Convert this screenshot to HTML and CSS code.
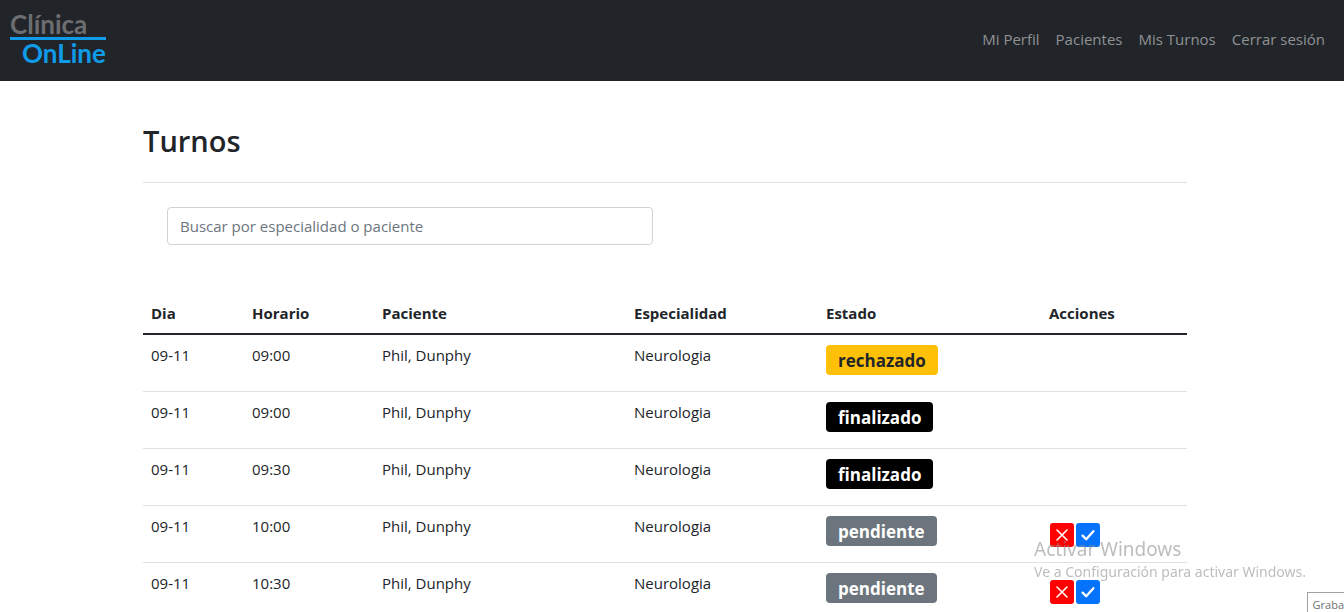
FILE: index.html
```html
<!DOCTYPE html>
<html lang="es">
<head>
<meta charset="utf-8">
<meta name="viewport" content="width=device-width, initial-scale=1">
<title>Clínica OnLine - Turnos</title>
<link rel="stylesheet" href="styles.css">
</head>
<body>
<svg class="sprite" aria-hidden="true">
  <symbol id="icon-x" viewBox="0 0 16 16"><path d="M3 3 13 13M13 3 3 13" fill="none" stroke="#fff" stroke-width="1.6" stroke-linecap="round"/></symbol>
  <symbol id="icon-check" viewBox="0 0 16 16"><path d="M2.6 8.6 6.2 12.2 13.4 4.2" fill="none" stroke="#fff" stroke-width="2.3" stroke-linecap="round" stroke-linejoin="round"/></symbol>
</svg>
<header class="navbar">
  <a class="brand" href="#">
    <span class="brand-top">Clínica</span>
    <span class="brand-bottom">OnLine</span>
  </a>
  <nav class="nav-links">
    <a href="#">Mi Perfil</a>
    <a href="#">Pacientes</a>
    <a href="#">Mis Turnos</a>
    <a href="#">Cerrar sesión</a>
  </nav>
</header>
<main class="page">
  <h1 class="title">Turnos</h1>
  <div class="search">
    <input class="search-input" type="text" placeholder="Buscar por especialidad o paciente" aria-label="Buscar por especialidad o paciente">
  </div>
  <table class="turnos">
    <colgroup>
      <col class="col-dia"><col class="col-horario"><col class="col-paciente"><col class="col-especialidad"><col class="col-estado"><col class="col-acciones">
    </colgroup>
    <thead>
      <tr><th>Dia</th><th>Horario</th><th>Paciente</th><th>Especialidad</th><th>Estado</th><th>Acciones</th></tr>
    </thead>
    <tbody>
      <tr><td>09-11</td><td>09:00</td><td>Phil, Dunphy</td><td>Neurologia</td><td><span class="badge rechazado">rechazado</span></td><td></td></tr>
      <tr><td>09-11</td><td>09:00</td><td>Phil, Dunphy</td><td>Neurologia</td><td><span class="badge finalizado">finalizado</span></td><td></td></tr>
      <tr><td>09-11</td><td>09:30</td><td>Phil, Dunphy</td><td>Neurologia</td><td><span class="badge finalizado">finalizado</span></td><td></td></tr>
      <tr><td>09-11</td><td>10:00</td><td>Phil, Dunphy</td><td>Neurologia</td><td><span class="badge pendiente">pendiente</span></td><td><div class="actions"><button class="action reject" type="button" aria-label="Rechazar"><svg><use href="#icon-x"/></svg></button><button class="action accept" type="button" aria-label="Aceptar"><svg><use href="#icon-check"/></svg></button></div></td></tr>
      <tr><td>09-11</td><td>10:30</td><td>Phil, Dunphy</td><td>Neurologia</td><td><span class="badge pendiente">pendiente</span></td><td><div class="actions"><button class="action reject" type="button" aria-label="Rechazar"><svg><use href="#icon-x"/></svg></button><button class="action accept" type="button" aria-label="Aceptar"><svg><use href="#icon-check"/></svg></button></div></td></tr>
    </tbody>
  </table>
</main>
<aside class="watermark">
  <p class="watermark-title">Activar Windows</p>
  <p class="watermark-text">Ve a Configuración para activar Windows.</p>
</aside>
<div class="tooltip">Graba</div>
</body>
</html>
```
FILE: styles.css
```css
* {
  box-sizing: border-box;
}

body {
  margin: 0;
  height: 100vh;
  overflow: hidden auto;
  scrollbar-width: none;
  background: #fff;
  color: #212529;
  font-family: "Open Sans", "Noto Sans", sans-serif;
  font-size: 15px;
  line-height: 24px;
}

.sprite {
  position: absolute;
  width: 0;
  height: 0;
}

.navbar {
  display: flex;
  align-items: center;
  justify-content: space-between;
  height: 81px;
  padding: 0 19px 4px 10px;
  background: #212529;
}

.brand {
  display: flex;
  flex-direction: column;
  font-family: Lato, sans-serif;
  font-size: 26px;
  font-weight: 700;
  line-height: 26px;
  text-decoration: none;
}

.brand-top {
  color: #6c6d70;
  border-bottom: 3px solid #0f9be8;
}

.brand-bottom {
  padding-left: 12px;
  color: #0f9be8;
}

.nav-links {
  display: flex;
  gap: 16px;
}

.nav-links a {
  color: #909294;
  text-decoration: none;
}

.page {
  padding: 40px 157px 0 143px;
}

.title {
  margin: 0;
  padding-bottom: 21px;
  border-bottom: 1px solid #dee2e6;
  font-size: 29px;
  font-weight: 600;
  line-height: 40px;
}

.search {
  padding: 24px;
}

.search-input {
  display: block;
  width: 486px;
  max-width: 100%;
  height: 38px;
  padding: 6px 12px;
  border: 1px solid #ced4da;
  border-radius: 4px;
  font: inherit;
  color: inherit;
}

.search-input::placeholder {
  color: #6c757d;
  opacity: 1;
}

.turnos {
  width: 100%;
  margin-top: 24px;
  table-layout: fixed;
  border-collapse: separate;
  border-spacing: 0;
}

.col-dia { width: 101px; }
.col-horario { width: 130px; }
.col-paciente { width: 252px; }
.col-especialidad { width: 192px; }
.col-estado { width: 223px; }
.col-acciones { width: 146px; }

.turnos th {
  padding: 8px;
  border-bottom: 2px solid #212529;
  text-align: left;
  font-weight: 700;
}

.turnos td {
  height: 57px;
  padding: 8px;
  border-bottom: 1px solid #dee2e6;
  vertical-align: top;
}

.badge {
  display: inline-block;
  margin-top: 2px;
  padding: 6px 12px 4px;
  border-radius: 4px;
  font-size: 17px;
  font-weight: 700;
  line-height: 20px;
}

.rechazado {
  background: #ffc107;
  color: #212529;
}

.finalizado {
  background: #000;
  color: #fff;
}

.pendiente {
  background: #6c757d;
  color: #fff;
}

.actions {
  display: flex;
  gap: 2px;
  padding: 9px 0 0 1px;
}

.action {
  display: grid;
  place-items: center;
  width: 24px;
  height: 24px;
  padding: 0;
  border: 0;
  border-radius: 3px;
}

.action svg {
  width: 16px;
  height: 16px;
}

.reject { background: #f00; }
.accept { background: #0773fb; }

.watermark {
  position: fixed;
  right: 38px;
  bottom: 29px;
  color: rgba(145, 145, 145, 0.6);
  font-family: "Noto Sans", sans-serif;
  pointer-events: none;
}

.watermark p {
  margin: 0;
}

.watermark-title {
  font-size: 19px;
  line-height: 24px;
}

.watermark-text {
  font-size: 14px;
  line-height: 22px;
}

.tooltip {
  position: fixed;
  right: 0;
  bottom: 0;
  padding: 5px 0 0 5px;
  border: 1px solid #a0a0a0;
  border-width: 1px 0 0 1px;
  background: #fff;
  color: #707070;
  font-size: 11px;
  line-height: 14px;
}
```
